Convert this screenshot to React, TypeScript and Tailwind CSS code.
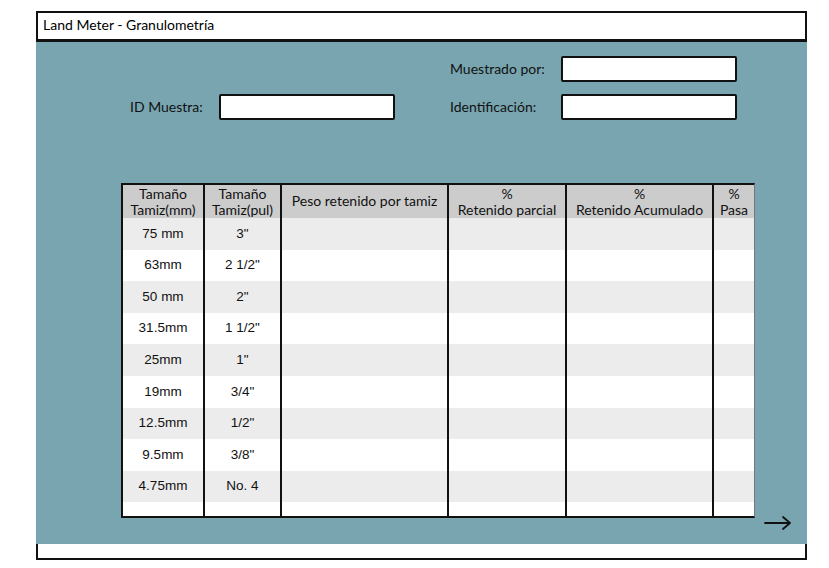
import React from "react";

const rows: [string, string][] = [
  ["75 mm", "3\""],
  ["63mm", "2 1/2\""],
  ["50 mm", "2\""],
  ["31.5mm", "1 1/2\""],
  ["25mm", "1\""],
  ["19mm", "3/4\""],
  ["12.5mm", "1/2\""],
  ["9.5mm", "3/8\""],
  ["4.75mm", "No. 4"],
];

const widths = ["w-[82px]", "w-[77px]", "w-[167px]", "w-[118px]", "w-[147px]", "w-[42px]"];

function Input({ w }: { w: string }) {
  return <div className={`${w} h-[26px] bg-white border-2 border-[#111] rounded-[2px]`} />;
}

export default function App() {
  const hand = { fontFamily: "Lato, 'Noto Sans', sans-serif" };
  return (
    <div className="w-[829px] h-[568px] bg-white pt-[11px] pl-[36px]" style={hand}>
      <div className="w-[771px] h-[549px] flex flex-col">
        <div className="h-[31px] border-2 border-b-[3px] border-[#111] bg-white flex items-center pl-[5px] pb-[4px] text-[14px] text-black">
          Land Meter - Granulometría
        </div>
        <div className="relative flex-1 bg-[#78a5b0] pt-[14px] pl-[94px]">
          <div className="grid grid-cols-[89px_176px_55px_111px_176px] grid-rows-[26px_26px] gap-y-[12px] items-center text-[14px] text-[#111]">
            <div />
            <div />
            <div />
            <div className="pb-[2px]">Muestrado por:</div>
            <Input w="w-[176px]" />
            <div className="pb-[2px]">ID Muestra:</div>
            <Input w="w-[176px]" />
            <div />
            <div className="pb-[2px]">Identificación:</div>
            <Input w="w-[176px]" />
          </div>
          <div className="ml-[-9px] mt-[63px] w-[634px] border-l-2 border-t-2 border-b-2 border-r border-l-[#111] border-t-[#111] border-b-[#111] border-r-[#777] bg-white">
            <div className="flex h-[33px] bg-[#cccccc] text-[14px] leading-[16px] text-[#111]">
              <div className={`${widths[0]} border-r-2 border-[#111] flex flex-col items-center justify-center`}>
                <span>Tamaño</span>
                <span>Tamiz(mm)</span>
              </div>
              <div className={`${widths[1]} border-r-2 border-[#111] flex flex-col items-center justify-center`}>
                <span>Tamaño</span>
                <span>Tamiz(pul)</span>
              </div>
              <div className={`${widths[2]} border-r-2 border-[#111] flex items-center justify-center pb-[2px]`}>
                Peso retenido por tamiz
              </div>
              <div className={`${widths[3]} border-r-2 border-[#111] flex flex-col items-center justify-center`}>
                <span>%</span>
                <span>Retenido parcial</span>
              </div>
              <div className={`${widths[4]} border-r-2 border-[#111] flex flex-col items-center justify-center`}>
                <span>%</span>
                <span>Retenido Acumulado</span>
              </div>
              <div className="flex-1 flex flex-col items-center justify-center">
                <span>%</span>
                <span>Pasa</span>
              </div>
            </div>
            {rows.map(([a, b], i) => (
              <div
                key={i}
                className={`flex h-[31.6px] text-[13.5px] text-[#111] ${i % 2 === 0 ? "bg-[#ececec]" : "bg-white"}`}
                style={{ fontFamily: "'Liberation Sans', Arial, sans-serif" }}
              >
                <div className={`${widths[0]} border-r-2 border-[#111] flex items-center justify-center`}>{a}</div>
                <div className={`${widths[1]} border-r-2 border-[#111] flex items-center justify-center`}>{b}</div>
                <div className={`${widths[2]} border-r-2 border-[#111]`} />
                <div className={`${widths[3]} border-r-2 border-[#111]`} />
                <div className={`${widths[4]} border-r-2 border-[#111]`} />
                <div className="flex-1" />
              </div>
            ))}
            <div className="flex h-[14px] bg-white">
              <div className={`${widths[0]} border-r-2 border-[#111]`} />
              <div className={`${widths[1]} border-r-2 border-[#111]`} />
              <div className={`${widths[2]} border-r-2 border-[#111]`} />
              <div className={`${widths[3]} border-r-2 border-[#111]`} />
              <div className={`${widths[4]} border-r-2 border-[#111]`} />
              <div className="flex-1" />
            </div>
          </div>
          <svg className="absolute right-[15px] bottom-[13px]" width="28" height="16" viewBox="0 0 28 16">
            <path d="M1 8 H26 M19 2 L26 8 L19 14" fill="none" stroke="#111" strokeWidth="1.8" strokeLinecap="round" strokeLinejoin="round" />
          </svg>
        </div>
        <div className="h-[16px] bg-white border-l-2 border-r-2 border-b-2 border-[#111]" />
      </div>
    </div>
  );
}
